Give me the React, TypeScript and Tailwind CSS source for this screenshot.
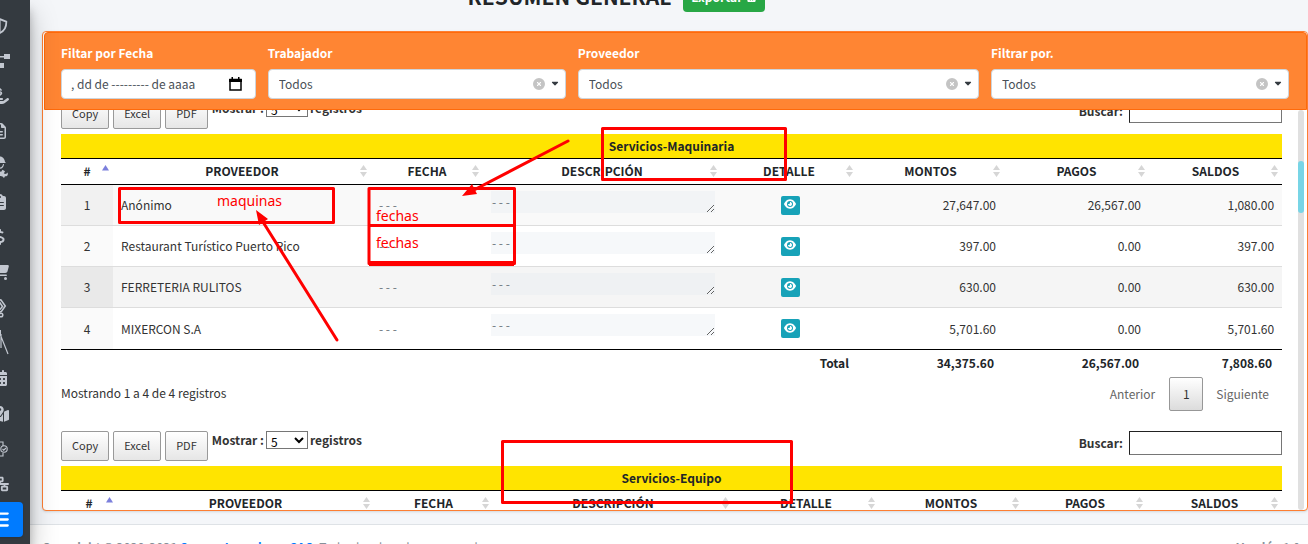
import React from 'react';
import {
  FaHandHoldingDollar,
  FaRegFileLines,
  FaClipboardList,
  FaDollarSign,
  FaCartShopping,
  FaCalendarDays,
  FaMapLocationDot,
  FaBars,
  FaEye,
  FaFileExcel,
  FaCircleXmark,
  FaCaretDown,
  FaNetworkWired,
} from 'react-icons/fa6';

const iconClass = 'h-4 w-4';

function Shield() {
  return (
    <svg viewBox="0 0 16 16" className={iconClass} fill="none" stroke="currentColor" strokeWidth="1.8">
      <path d="M8 1.2 14.3 3.6C14.5 9 12.5 13 8 14.9 3.500 13 1.500 9 1.700 3.600Z" />
      <path d="M8 1v14" strokeWidth="1.200" />
    </svg>
  );
}

function Diagram() {
  return (
    <svg viewBox="0 0 20 16" className="h-4 w-5" fill="currentColor">
      <path d="M0 1h6v5H0zM14 1h6v5h-6zM8 10h6v5H8zM6 3h8v1.500H6zM5 5l5 5-1.200 1L4 6z" />
    </svg>
  );
}

function Worker() {
  return (
    <svg viewBox="0 0 18 22" className="h-[22px] w-[18px]" fill="currentColor">
      <path d="M4 6C4.500 2 7 .5 9 .5S13.500 2 14 6l1 1H3z" />
      <path d="M5 8h1c.3 2 1.500 3.500 3 3.500S11.700 10 12 8h1c-.2 3-1.800 4.700-4 4.700S5.200 11 5 8z" />
      <path d="M1 20c0-4 2-6 5-7l4 3 1.500-2.200 2.500 1.400-1.200 2.300 2.200.5 1.500-1.500c1 2-.2 4-2.500 3.800L13 22l-1.500-1.500L9.500 20z" />
    </svg>
  );
}

function Excavator() {
  return (
    <svg viewBox="0 0 16 20" className="h-5 w-4" fill="none" stroke="currentColor" strokeWidth="1.500">
      <path d="M5 1.500 9 2 13.300 8 9 14M7 3.500 10.500 8.500 7 12.500M9 14l-4-1" />
      <circle cx="9" cy="17" r="1.800" />
    </svg>
  );
}

function Compass() {
  return (
    <svg viewBox="0 0 18 26" className="h-[26px] w-[18px]" fill="none" stroke="currentColor">
      <path d="M9 0v5" strokeWidth="2" />
      <path d="M9 4 1 24M9 4l8 20M10 4v14" strokeWidth="1.200" />
    </svg>
  );
}

function Inspection() {
  return (
    <svg viewBox="0 0 16 16" className={iconClass} fill="none" stroke="currentColor" strokeWidth="1.100">
      <path d="M3 1h8v4M3 1v14h8v-3M4 8l4-4M5 12l3-2" />
      <circle cx="12" cy="8" r="3.200" />
      <path d="m10.500 8 1.200 1.200L14 7" />
    </svg>
  );
}

const menu = [
  { label: 'Seguridad', icon: <Shield /> },
  { label: 'Procesos', icon: <Diagram /> },
  { label: 'Pagos', icon: <FaHandHoldingDollar size={18} /> },
  { label: 'Documentos', icon: <FaRegFileLines size={16} /> },
  { label: 'Trabajadores', icon: <Worker /> },
  { label: 'Tareas', icon: <FaClipboardList size={16} /> },
  { label: 'Finanzas', icon: <FaDollarSign size={16} /> },
  { label: 'Compras', icon: <FaCartShopping size={18} /> },
  { label: 'Maquinaria', icon: <Excavator /> },
  { label: 'Planos', icon: <Compass /> },
  { label: 'Calendario', icon: <FaCalendarDays size={16} /> },
  { label: 'Obras', icon: <FaMapLocationDot size={18} /> },
  { label: 'Control', icon: <Inspection /> },
  { label: 'Organización', icon: <FaNetworkWired size={18} /> },
  { label: 'Resumen', icon: <FaBars size={19} />, active: true },
];

function Sidebar() {
  return (
    <aside className="relative z-10 w-[30px] shrink-0 bg-[#343a40] shadow-[0_14px_28px_rgba(0,0,0,0.25),0_10px_10px_rgba(0,0,0,0.22)]">
      <div className="h-full overflow-hidden">
        <nav className="-ml-[23px] flex h-full w-[46px] flex-col pt-2 pb-[7px]">
          {menu.map((m) => (
            <a
              key={m.label}
              href="#"
              aria-label={m.label}
              className={
                m.active
                  ? 'flex min-h-0 flex-1 items-center justify-center rounded bg-[#007bff] text-white shadow'
                  : 'flex min-h-0 flex-1 items-center justify-center text-[#c2c7d0]'
              }
            >
              {m.icon}
            </a>
          ))}
        </nav>
      </div>
    </aside>
  );
}

function FilterSelect({ id, label, span }: { id: string; label: string; span: string }) {
  return (
    <div className={span}>
      <label htmlFor={id} className="block text-xs leading-4 font-bold text-white">
        {label}
      </label>
      <div className="relative mt-2">
        <select
          id={id}
          className="block h-[30px] w-full appearance-none rounded border border-[#ced4da] bg-white px-[10px] text-xs text-[#495057]"
        >
          <option>Todos</option>
        </select>
        <button type="button" aria-label="Limpiar" className="absolute top-[9px] right-[21px] text-[#c4c4c4]">
          <FaCircleXmark size={12} />
        </button>
        <FaCaretDown size={10} className="pointer-events-none absolute top-[9px] right-[6px] text-[#343a40]" />
      </div>
    </div>
  );
}

function Filters() {
  return (
    <form className="relative ml-px grid grid-cols-12 gap-3 rounded-t border border-[#ff6a0a] bg-[#ff8533] pt-3 pr-[17px] pb-[10px] pl-4">
      <div className="col-span-2">
        <label htmlFor="fecha" className="block text-xs leading-4 font-bold text-white">
          Filtar por Fecha
        </label>
        <div className="relative mt-2">
          <input
            id="fecha"
            type="text"
            placeholder=", dd de --------- de aaaa"
            className="block h-[30px] w-full rounded border border-[#ced4da] bg-white px-[9px] pb-[2px] text-xs placeholder:text-[#495057]"
          />
          <svg viewBox="0 0 13 14" className="absolute top-2 right-[14px] h-[14px] w-[13px] text-black">
            <path d="M1 2.500h11v10.500H1z" fill="none" stroke="currentColor" strokeWidth="1.500" />
            <path d="M0 2h13v3H0zM2.500 0h1.500v2H2.500zM9 0h1.500v2H9z" fill="currentColor" />
          </svg>
        </div>
      </div>
      <FilterSelect id="trabajador" label="Trabajador" span="col-span-3" />
      <FilterSelect id="proveedor" label="Proveedor" span="col-span-4" />
      <FilterSelect id="filtrar" label="Filtrar por." span="col-span-3" />
    </form>
  );
}

function Toolbar({ id }: { id: string }) {
  const button =
    'h-[30px] rounded-xs border border-[#999] bg-linear-to-b from-white to-[#e6e6e6] px-[10px] pb-[2px] text-[11px] text-[#333]';
  return (
    <div className="flex items-start justify-between pb-[5px] text-xs text-[#333]">
      <div className="flex items-start gap-1">
        <button type="button" className={button}>Copy</button>
        <button type="button" className={button}>Excel</button>
        <button type="button" className={button}>PDF</button>
        <label htmlFor={`${id}-len`} className="flex items-center gap-[2px] font-bold leading-[18px]">
          Mostrar :
          <select
            id={`${id}-len`}
            className="h-[18px] w-[42px] border border-[#767676] bg-white text-xs leading-4 font-normal text-black"
          >
            <option>5</option>
            <option>10</option>
          </select>
          registros
        </label>
      </div>
      <label htmlFor={`${id}-search`} className="flex items-center gap-[6px] font-bold">
        Buscar:
        <input
          id={`${id}-search`}
          type="search"
          className="h-6 w-[153px] border border-t-[#222] border-r-[#767676] border-b-[#767676] border-l-[#222] bg-white px-1 font-normal"
        />
      </label>
    </div>
  );
}

function SortIcon({ asc }: { asc?: boolean }) {
  return (
    <svg viewBox="0 0 7 12" className="absolute top-[6px] right-1 h-3 w-[7px]">
      {asc ? (
        <path d="M3.500 0 7 5.500H0z" fill="#7b7fdc" />
      ) : (
        <path d="M3.500 0 7 5H0zM3.500 12 7 7H0z" fill="#d6d6d6" />
      )}
    </svg>
  );
}

const headers = ['#', 'PROVEEDOR', 'FECHA', 'DESCRIPCIÓN', 'DETALLE', 'MONTOS', 'PAGOS', 'SALDOS'];

function TableHead({ title }: { title: string }) {
  return (
    <thead>
      <tr>
        <th colSpan={8} className="h-[25px] border-b border-black bg-[#ffe400] font-bold">
          {title}
        </th>
      </tr>
      <tr>
        {headers.map((h, i) => (
          <th key={h} className="relative h-[26px] border-b border-black pb-px font-bold">
            {h}
            <SortIcon asc={i === 0} />
          </th>
        ))}
      </tr>
    </thead>
  );
}

const rows = [
  { n: 1, name: 'Anónimo', m: '27,647.00', p: '26,567.00', s: '1,080.00', bg: 'bg-[#f9f9f9]', first: 'bg-[#f1f1f1]' },
  { n: 2, name: 'Restaurant Turístico Puerto Rico', m: '397.00', p: '0.00', s: '397.00', bg: 'bg-white', first: 'bg-[#fafafa]' },
  { n: 3, name: 'FERRETERIA RULITOS', m: '630.00', p: '0.00', s: '630.00', bg: 'bg-[#f5f5f5]', first: 'bg-[#e9e9e9]' },
  { n: 4, name: 'MIXERCON S.A', m: '5,701.60', p: '0.00', s: '5,701.60', bg: 'bg-white', first: 'bg-[#fafafa]' },
];

function Columns({ widths }: { widths: string[] }) {
  return (
    <colgroup>
      {widths.map((w, i) => (
        <col key={i} className={w} />
      ))}
    </colgroup>
  );
}

const tableClass = 'w-full table-fixed border-separate border-spacing-0 text-xs leading-4 text-[#212529]';

function MachineryTable() {
  return (
    <table className={tableClass}>
      <Columns
        widths={['w-[52px]', 'w-[258px]', 'w-[112px]', 'w-[238px]', 'w-[136px]', 'w-[147px]', 'w-[145px]', 'w-[133px]']}
      />
      <TableHead title="Servicios-Maquinaria" />
      <tbody className="text-[#333]">
        {rows.map((r, i) => {
          const line = i < 3 ? 'h-[41px] border-b border-[#ddd]' : 'h-[42px] border-b border-black';
          return (
            <tr key={r.n} className={r.bg}>
              <td className={`${line} ${r.first} text-center`}>{r.n}</td>
              <td className={`${line} px-2`}>{r.name}</td>
              <td className={`${line} px-2 text-[#6c757d]`}>- - -</td>
              <td className={`${line} pr-[6px] pl-2 align-top`}>
                <textarea
                  aria-label={`Descripción ${r.n}`}
                  defaultValue="- - -"
                  className="mt-[6px] block h-[22px] w-full overflow-hidden bg-[#e4eaf0]/35 px-px py-[3px] text-xs leading-4 text-[#6c757d]"
                />
              </td>
              <td className={`${line} pl-[2px] text-center`}>
                <button
                  type="button"
                  aria-label="Ver detalle"
                  className="inline-flex h-[19px] w-[19px] items-center justify-center rounded-xs bg-[#17a2b8] pb-[2px] align-middle text-white"
                >
                  <FaEye size={12} />
                </button>
              </td>
              <td className={`${line} px-2 text-right`}>{r.m}</td>
              <td className={`${line} px-2 text-right`}>{r.p}</td>
              <td className={`${line} px-2 text-right`}>{r.s}</td>
            </tr>
          );
        })}
      </tbody>
      <tfoot>
        <tr className="text-right font-bold">
          <td colSpan={5} className="h-[27px] px-2 pb-[2px]">Total</td>
          <td className="px-[10px] pb-[2px]">34,375.60</td>
          <td className="px-[10px] pb-[2px]">26,567.00</td>
          <td className="px-[10px] pb-[2px]">7,808.60</td>
        </tr>
      </tfoot>
    </table>
  );
}

function Annotations() {
  return (
    <div className="pointer-events-none absolute inset-0 z-20 text-sm leading-4 text-[#f00]">
      <svg width="1308" height="544" fill="none" stroke="#f00" strokeWidth="3" strokeLinejoin="round" strokeLinecap="round">
        <path d="M602.500 128.500H785.500V179.500H602.500zM119.500 188.500H333.500V222.500H119.500zM369 188.500H514.500V225.500H369zM369 225.500H514.500V263.500H369zM502.500 441.500H791.500V502.500H502.500z" />
        <path d="M369 263.500H514" strokeWidth="5" strokeLinecap="butt" />
        <path d="M568 141 472 191M337 340 263 222" />
        <path d="M462 196 472 184 477 194zM256 210 268 219 259 225z" fill="#f00" stroke="none" />
      </svg>
      <span className="absolute top-[193px] left-[217px] font-['Noto_Sans']">maquinas</span>
      <span className="absolute top-[208px] left-[376px] font-['Noto_Sans']">fechas</span>
      <span className="absolute top-[235px] left-[376px] font-['Noto_Sans']">fechas</span>
    </div>
  );
}

export default function App() {
  return (
    <div className="relative flex h-screen overflow-hidden bg-[#f4f6f9] font-['Noto_Sans_CJK_SC','Noto_Sans',sans-serif]">
      <Sidebar />
      <div className="flex min-w-0 flex-1 flex-col">
        <header className="flex h-[31px] shrink-0 items-end justify-center gap-3 pr-[105px] pb-[19px]">
          <h1 className="text-[21px] leading-8 font-bold text-[#212529]">RESUMEN GENERAL</h1>
          <button
            type="button"
            className="flex h-[31px] items-center gap-1 rounded bg-[#28a745] px-2 text-xs font-bold text-white"
          >
            Exportar <FaFileExcel size={11} />
          </button>
        </header>

        <main className="ml-3 flex min-h-0 flex-1 flex-col rounded border border-[#fd7e32] bg-white shadow">
          <Filters />
          <div className="flex min-h-0 flex-1">
            <div className="min-w-0 flex-1 overflow-hidden pr-4 pl-[18px]">
              <section className="-mt-[11px]">
                <Toolbar id="maquinaria" />
                <MachineryTable />
                <div className="flex items-start justify-between pb-5 text-xs text-[#333]">
                  <p className="pt-2 leading-4">Mostrando 1 a 4 de 4 registros</p>
                  <div className="flex items-center text-[#666]">
                    <button type="button" className="px-[14px]">Anterior</button>
                    <button
                      type="button"
                      className="h-[34px] w-[34px] rounded-xs border border-[#979797] bg-linear-to-b from-white to-[#dcdcdc] text-[#333]"
                    >
                      1
                    </button>
                    <button type="button" className="px-[13px]">Siguiente</button>
                  </div>
                </div>
              </section>
              <section>
                <Toolbar id="equipo" />
                <table className={tableClass}>
                  <Columns
                    widths={['w-[56px]', 'w-[257px]', 'w-[119px]', 'w-[240px]', 'w-[146px]', 'w-[144px]', 'w-[124px]', 'w-[135px]']}
                  />
                  <TableHead title="Servicios-Equipo" />
                </table>
              </section>
            </div>
            <div className="mr-[3px] w-[6px] rounded bg-[#e0e0e0] pt-[51px]">
              <div className="h-[52px] rounded bg-[#78d5e6]" />
            </div>
          </div>
        </main>

        <footer className="mt-[13px] flex h-5 shrink-0 justify-between overflow-hidden border-t border-[#dee2e6] bg-white pt-3 pr-2 pl-3 text-xs leading-5 text-[#869099]">
          <p className="whitespace-nowrap">
            <b>
              Copyright © 2020-2021{' '}
              <a href="#" className="text-[#007bff]">Sevens Ingenieros SAC.</a>
            </b>{' '}
            Todos los derechos reservados.
          </p>
          <p>
            <b>Versión</b> 1.0
          </p>
        </footer>
      </div>
      <Annotations />
    </div>
  );
}
